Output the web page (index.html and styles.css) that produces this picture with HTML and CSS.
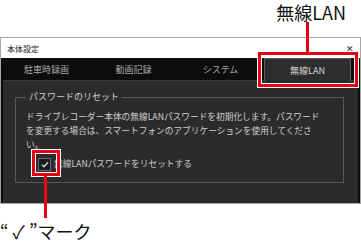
FILE: index.html
```html
<!DOCTYPE html>
<html lang="ja">
<head>
<meta charset="utf-8">
<link rel="stylesheet" href="styles.css">
</head>
<body>
<div class="page">
  <div class="top-label">無線LAN</div>
  <div class="window">
    <div class="titlebar">
      <span class="title">本体設定</span>
      <span class="close">✕</span>
    </div>
    <div class="frame">
      <div class="tabs">
        <div class="tab">駐車時録画</div>
        <div class="tab">動画記録</div>
        <div class="tab">システム</div>
        <div class="tab active">無線LAN</div>
      </div>
      <div class="panel">
        <fieldset class="group">
          <legend>パスワードのリセット</legend>
          <p class="desc">ドライブレコーダー本体の無線LANパスワードを初期化します。パスワード<br>を変更する場合は、スマートフォンのアプリケーションを使用してくださ<br>い。</p>
          <label class="check">
            <span class="box"><svg width="8" height="7" viewBox="0 0 8 7"><path d="M1 3.8 L3 5.8 L7 1.2" fill="none" stroke="#d8d8d8" stroke-width="1.4"/></svg></span>
            <span>無線LANパスワードをリセットする</span>
          </label>
        </fieldset>
      </div>
    </div>
  </div>
  <div class="bottom-label">“ ✓ ”マーク</div>

  <div class="mark mark-tab"></div>
  <div class="line line-tab"></div>
  <div class="mark mark-check"></div>
  <div class="line line-check"></div>
</div>
</body>
</html>
```
FILE: styles.css
```css
html, body {
  margin: 0;
  padding: 0;
  background: #fff;
}
body {
  font-family: "Noto Sans CJK JP", "Noto Sans", sans-serif;
}
.page {
  position: relative;
  width: 361px;
  height: 248px;
  overflow: hidden;
}
.top-label {
  height: 37px;
  box-sizing: border-box;
  text-align: right;
  padding-right: 15px;
  font-size: 18px;
  line-height: 24px;
  color: #111;
}
.window {
  border: 1px solid #a6a6a6;
  background: #0c0c0c;
}
.titlebar {
  height: 20px;
  background: #fff;
  display: flex;
  align-items: center;
  justify-content: space-between;
  padding: 0 6px 0 6px;
  color: #222;
}
.title {
  font-size: 8px;
}
.close {
  font-size: 9px;
  color: #333;
}
.frame {
  padding: 0 2px 0 2px;
  background: #0c0c0c;
}
.tabs {
  display: grid;
  grid-template-columns: repeat(4, 87px);
  grid-template-rows: 22px;
  height: 22px;
}
.tab {
  display: flex;
  align-items: center;
  justify-content: center;
  font-size: 9px;
  color: #a8a8a8;
}
.tab.active {
  background: #2d2d2d;
  border: 1px solid #5c5c5c;
  border-bottom: none;
  height: 23px;
  box-sizing: border-box;
  color: #d6d6d6;
  position: relative;
  z-index: 1;
}
.panel {
  height: 123px;
  box-sizing: border-box;
  overflow: hidden;
  background: #2b2b2b;
  border-top: 1px solid #3a3a3a;
  padding: 10px 14px 0 12px;
}
.group {
  margin: 0;
  border: 1px solid #585858;
  padding: 0 10px 11px 10px;
  color: #cfcfcf;
}
.group legend {
  font-size: 9px;
  line-height: 12px;
  padding: 0 3px;
  color: #d0d0d0;
}
.desc {
  margin: 7px 0 0 0;
  font-size: 8.7px;
  line-height: 14px;
  color: #cfcfcf;
  white-space: nowrap;
}
.check {
  display: flex;
  align-items: center;
  gap: 3px;
  margin: 5px 0 0 12px;
  font-size: 8.7px;
  line-height: 14px;
  color: #cfcfcf;
}
.box {
  width: 13px;
  height: 13px;
  box-sizing: border-box;
  background: #1c1c1c;
  border: 1px solid #6a6a6a;
  display: flex;
  align-items: center;
  justify-content: center;
}
.bottom-label {
  padding-top: 16px;
  font-size: 18px;
  line-height: 22px;
  color: #111;
  white-space: pre;
}
.mark {
  position: absolute;
  border: 3px solid #e60012;
  box-shadow: 0 0 0 1px #fff, inset 0 0 0 1px #fff;
  box-sizing: border-box;
}
.mark-tab {
  left: 258px;
  top: 52px;
  width: 100px;
  height: 35px;
}
.mark-check {
  left: 32px;
  top: 150px;
  width: 28px;
  height: 26px;
}
.line {
  position: absolute;
  background: #e60012;
  width: 3px;
}
.line-tab {
  left: 306px;
  top: 22px;
  height: 30px;
}
.line-check {
  left: 44px;
  top: 176px;
  height: 42px;
}
```
